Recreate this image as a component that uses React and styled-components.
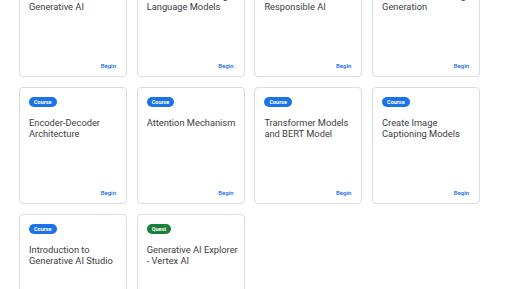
import React from "react";
import styled, { createGlobalStyle } from "styled-components";

const Global = createGlobalStyle`
  html, body { margin: 0; padding: 0; background: #ffffff; overflow: hidden; }
  body { font-family: Roboto, "Noto Sans", Arial, sans-serif; }
`;

const Page = styled.div`
  width: 516px;
  height: 289px;
  overflow: hidden;
  background: #fff;
`;

const Grid = styled.div`
  display: grid;
  grid-template-columns: repeat(4, 108px);
  grid-auto-rows: 117px;
  column-gap: 9.7px;
  row-gap: 10px;
  padding-left: 19px;
  margin-top: -40px;
`;

const Card = styled.div`
  box-sizing: border-box;
  border: 1px solid #dadce0;
  border-radius: 4px;
  background: #fff;
  display: flex;
  flex-direction: column;
  padding: 9px 10px 6px 9px;
`;

const Badge = styled.span`
  align-self: flex-start;
  height: 10px;
  padding: 0 5px;
  border-radius: 5px;
  background: ${(p) => (p.$kind === "Quest" ? "#188038" : "#1a73e8")};
  color: #fff;
  font-size: 5.5px;
  font-weight: 700;
  line-height: 10px;
`;

const Title = styled.div`
  margin-top: 11px;
  margin-right: -5px;
  font-size: 9.3px;
  line-height: 10.8px;
  color: #3c4043;
  flex: 1;
`;

const Begin = styled.div`
  align-self: flex-end;
  font-size: 6px;
  font-weight: 600;
  color: #1a73e8;
  line-height: 8px;
`;

const items = [
  ["Course", "Introduction to Generative AI"],
  ["Course", "Introduction to Large Language Models"],
  ["Course", "Introduction to Responsible AI"],
  ["Course", "Introduction to Image Generation"],
  ["Course", "Encoder-Decoder Architecture"],
  ["Course", "Attention Mechanism"],
  ["Course", "Transformer Models and BERT Model"],
  ["Course", "Create Image Captioning Models"],
  ["Course", "Introduction to Generative AI Studio"],
  ["Quest", "Generative AI Explorer - Vertex AI"],
];

export default function App() {
  return (
    <Page>
      <Global />
      <Grid>
        {items.map(([kind, title]) => (
          <Card key={title}>
            <Badge $kind={kind}>{kind}</Badge>
            <Title>{title}</Title>
            <Begin>Begin</Begin>
          </Card>
        ))}
      </Grid>
    </Page>
  );
}
